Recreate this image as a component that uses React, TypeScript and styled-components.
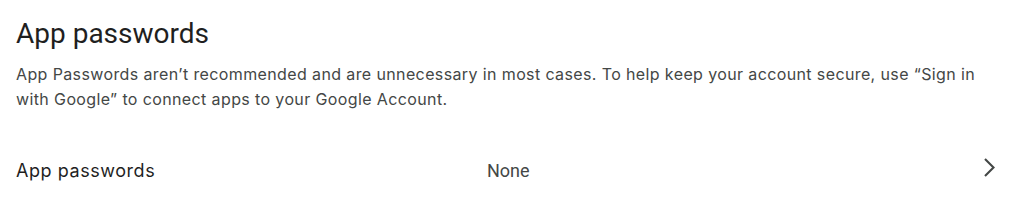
import React from "react";
import styled, { createGlobalStyle } from "styled-components";

const Global = createGlobalStyle`
  html, body { margin: 0; padding: 0; background: #fff; }
  body { font-family: Inter, Roboto, Arial, sans-serif; }
`;

const Page = styled.div`
  padding: 16px 16px 0 16px;
  width: 1023px;
  box-sizing: border-box;
`;

const Title = styled.h1`
  margin: 0;
  font-family: Roboto, Arial, sans-serif;
  font-weight: 400;
  font-size: 28px;
  line-height: 36px;
  color: #1f1f1f;
`;

const Description = styled.p`
  margin: 10px 0 0 0;
  font-size: 16px;
  line-height: 25px;
  letter-spacing: 0.38px;
  color: #444746;
  max-width: 975px;
`;

const Row = styled.div`
  display: grid;
  grid-template-columns: 471px 1fr 24px;
  align-items: center;
  height: 56px;
  margin-top: 30px;
  padding-right: 6px;
`;

const RowLabel = styled.div`
  font-size: 18px;
  letter-spacing: 0.55px;
  color: #1f1f1f;
`;

const RowValue = styled.div`
  font-family: Roboto, Arial, sans-serif;
  font-size: 18px;
  color: #444746;
`;

const Chevron = styled.svg`
  display: block;
  width: 24px;
  height: 24px;
  color: #444746;
`;

export default function App() {
  return (
    <>
      <Global />
      <Page>
        <Title>App passwords</Title>
        <Description>
          App Passwords aren’t recommended and are unnecessary in most cases. To help keep your account secure, use “Sign in with Google” to connect apps to your Google Account.
        </Description>
        <Row>
          <RowLabel>App passwords</RowLabel>
          <RowValue>None</RowValue>
          <Chevron viewBox="0 0 24 24" fill="none">
            <polyline points="8,1 16.5,9.5 8,18" stroke="currentColor" strokeWidth="2.1" />
          </Chevron>
        </Row>
      </Page>
    </>
  );
}
